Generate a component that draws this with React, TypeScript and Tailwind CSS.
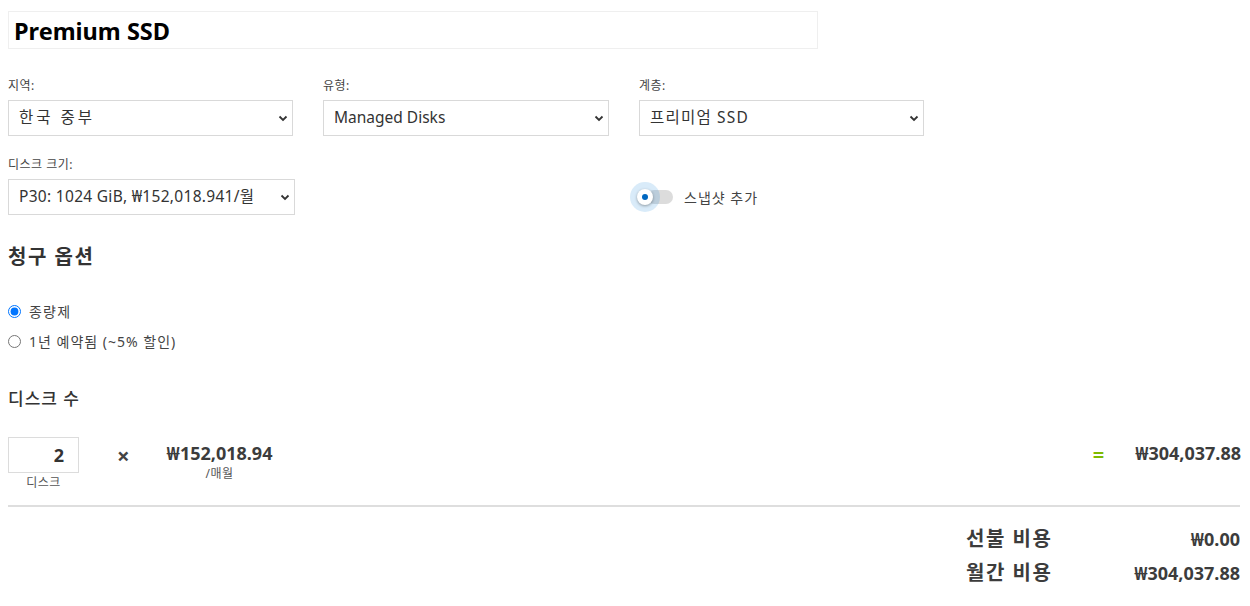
import React, { useState } from 'react';

const font = { fontFamily: '"Noto Sans", "Noto Sans CJK KR", sans-serif' };

const Chevron: React.FC = () => (
  <svg width="12" height="12" viewBox="0 0 12 12" className="text-[#333]">
    <path d="M2.5 4.5 L6 8 L9.5 4.5" fill="none" stroke="currentColor" strokeWidth="1.8" />
  </svg>
);

const Select: React.FC<{ label: string; value: string; width: string; valueClass?: string }> = ({
  label,
  value,
  width,
  valueClass = '',
}) => (
  <div className="flex flex-col">
    <label className="text-[12px] text-[#444] leading-[16px] mb-[6px] tracking-[0.5px]">{label}</label>
    <div className={`${width} h-[36px] border border-[#d9d9d9] bg-white flex items-center justify-between pl-[10px] pr-[3px]`}>
      <span className={`text-[15.5px] text-[#333] ${valueClass}`}>{value}</span>
      <Chevron />
    </div>
  </div>
);

export default function App() {
  const [plan, setPlan] = useState('payg');

  return (
    <div className="w-[1250px] h-[606px] bg-white text-[#333] px-[8px] pt-[11px] overflow-hidden" style={font}>
      <div className="w-[810px] h-[38px] border border-[#efefef] flex items-center px-[5px]">
        <h1 className="text-[23.5px] font-bold text-black mt-[3px]">Premium SSD</h1>
      </div>

      <div className="grid grid-cols-[315px_316px_300px] mt-[29px]">
        <Select label="지역:" value="한국 중부" width="w-[285px]" valueClass="tracking-[3px]" />
        <Select label="유형:" value="Managed Disks" width="w-[286px]" />
        <Select label="계층:" value="프리미엄 SSD" width="w-[285px]" valueClass="tracking-[1.2px]" />
      </div>

      <div className="grid grid-cols-[631px_300px] mt-[21px] items-end">
        <Select
          label="디스크 크기:"
          value="P30: 1024 GiB, ₩152,018.941/월"
          width="w-[287px]"
          valueClass="tracking-[0.3px]"
        />
        <div className="flex items-center h-[36px]">
          <div className="relative w-[36px] h-[30px] flex items-center">
            <div className="absolute left-[8px] w-[26px] h-[14px] rounded-full bg-[#dcdcdc]" />
            <div className="absolute left-[-9px] w-[30px] h-[30px] rounded-full bg-[#0078d4]/15" />
            <div className="absolute left-[-2px] w-[16px] h-[16px] rounded-full bg-white shadow-[0_1px_3px_rgba(0,0,0,0.35)] flex items-center justify-center">
              <div className="w-[6px] h-[6px] rounded-full bg-[#0067c0]" />
            </div>
          </div>
          <span className="ml-[9px] text-[14px] text-[#444] tracking-[1px]">스냅샷 추가</span>
        </div>
      </div>

      <h2 className="text-[20px] font-bold mt-[29px] leading-[26px] tracking-[1.5px]">청구 옵션</h2>

      <div className="mt-[31px] flex flex-col gap-[9px] text-[14px] text-[#444]">
        <label className="flex items-center gap-[8px] tracking-[1.2px]">
          <input
            type="radio"
            name="plan"
            checked={plan === 'payg'}
            onChange={() => setPlan('payg')}
            className="w-[13px] h-[13px] m-0 accent-[#0075ff]"
          />
          종량제
        </label>
        <label className="flex items-center gap-[8px] tracking-[1px]">
          <input
            type="radio"
            name="plan"
            checked={plan === '1y'}
            onChange={() => setPlan('1y')}
            className="w-[13px] h-[13px] m-0 accent-[#0075ff]"
          />
          1년 예약됨 (~5% 할인)
        </label>
      </div>

      <h3 className="text-[17px] font-medium mt-[36px] leading-[22px] tracking-[1px]">디스크 수</h3>

      <div className="flex items-start mt-[27px]">
        <div className="flex flex-col items-center w-[71px]">
          <div className="w-[71px] h-[36px] border border-[#dcdcdc] flex items-center justify-end pr-[14px] text-[18px] font-bold text-[#333]">
            2
          </div>
          <span className="text-[12px] text-[#555] mt-[1px] tracking-[0.5px]">디스크</span>
        </div>
        <span className="ml-[38px] mt-[2px] text-[22px] font-bold text-[#444]">×</span>
        <div className="ml-[37px] flex flex-col items-center mt-[4px]">
          <span className="text-[18px] font-bold text-[#3c3c3c] leading-[24px]">₩152,018.94</span>
          <span className="text-[12px] text-[#555] tracking-[0.5px]">/매월</span>
        </div>
        <div className="flex-1" />
        <span className="mt-[3px] text-[20px] font-bold text-[#7fba00]">=</span>
        <span className="ml-[31px] mt-[4px] text-[18px] font-bold text-[#3c3c3c] leading-[24px] pr-[1px]">₩304,037.88</span>
      </div>

      <div className="h-[2px] bg-[#dedede] mt-[13px] w-[1232px]" />

      <div className="flex flex-col items-end w-[1232px] mt-[18px] gap-[6px]">
        <div className="flex items-center">
          <span className="text-[20px] font-bold text-[#3c3c3c] w-[100px] leading-[28px] tracking-[1.5px]">선불 비용</span>
          <span className="text-[18px] font-bold text-[#3c3c3c] w-[174px] text-right">₩0.00</span>
        </div>
        <div className="flex items-center">
          <span className="text-[20px] font-bold text-[#3c3c3c] w-[100px] leading-[28px] tracking-[1.5px]">월간 비용</span>
          <span className="text-[18px] font-bold text-[#3c3c3c] w-[174px] text-right">₩304,037.88</span>
        </div>
      </div>
    </div>
  );
}
